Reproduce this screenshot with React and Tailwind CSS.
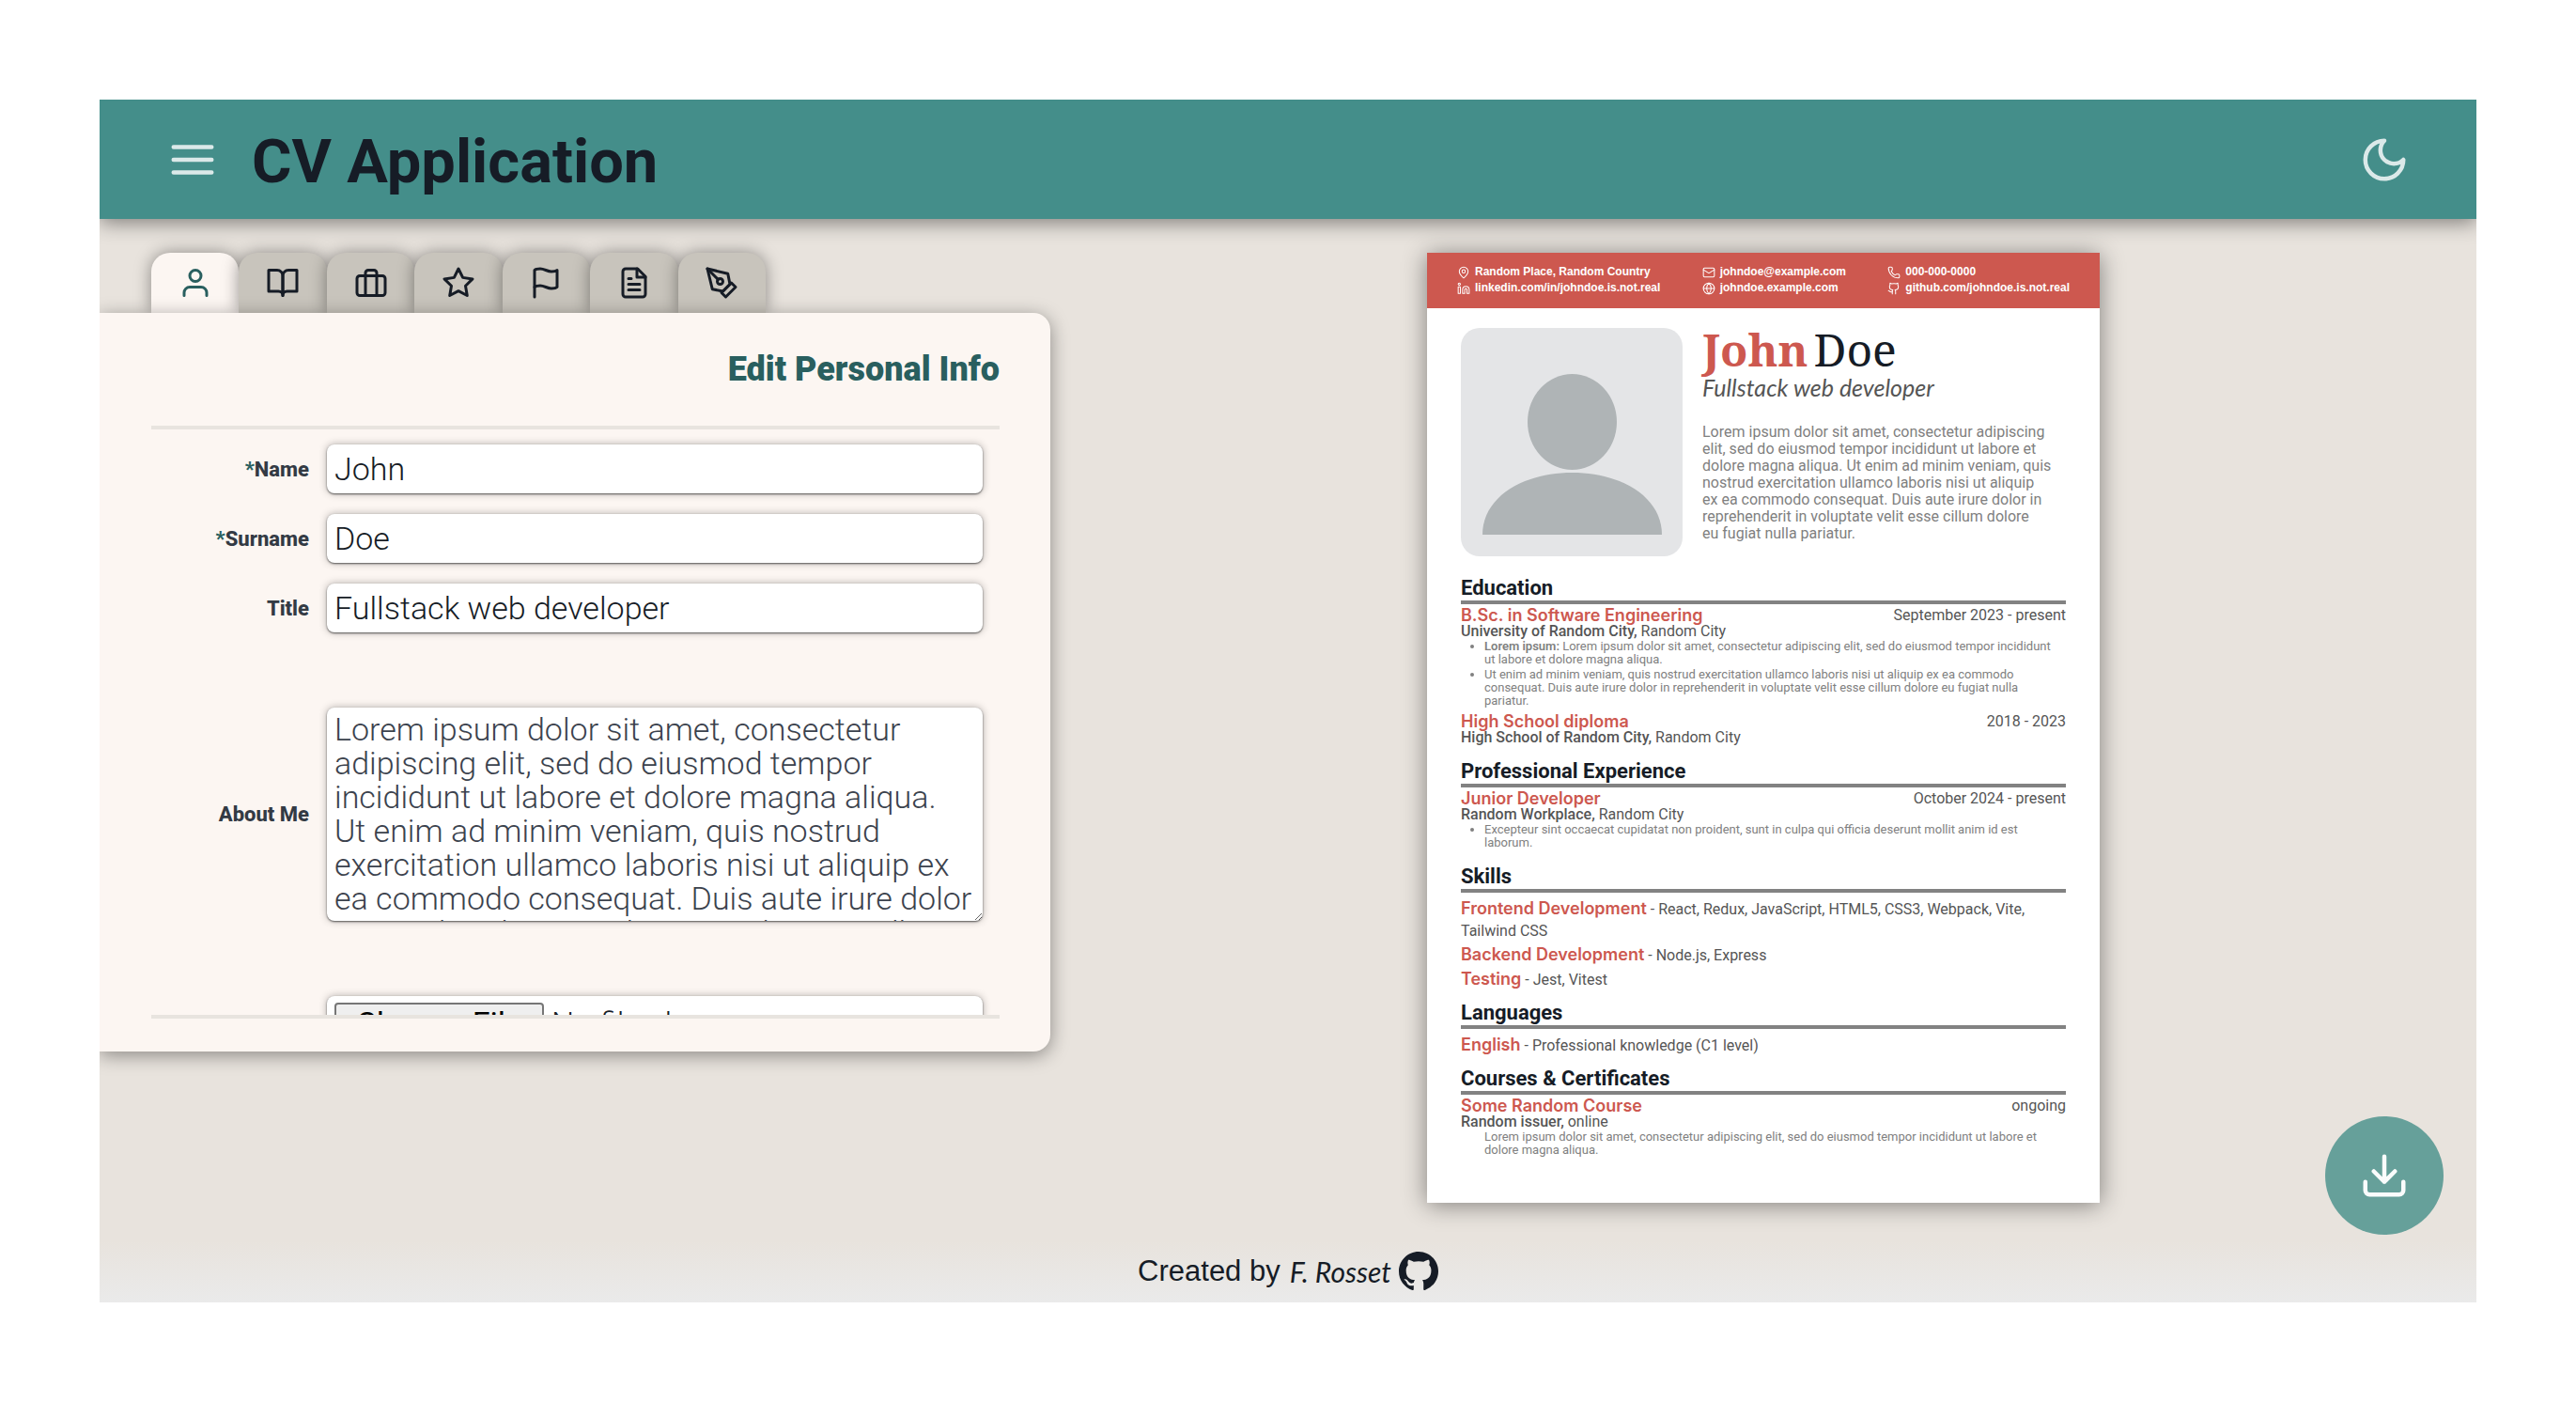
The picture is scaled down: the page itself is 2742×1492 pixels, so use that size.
import { Github, Globe, Linkedin, Mail, MapPin, Phone } from 'lucide-react';

const ABOUT =
  'Lorem ipsum dolor sit amet, consectetur adipiscing elit, sed do eiusmod tempor incididunt ut labore et dolore magna aliqua. Ut enim ad minim veniam, quis nostrud exercitation ullamco laboris nisi ut aliquip ex ea commodo consequat. Duis aute irure dolor in reprehenderit in voluptate velit esse cillum dolore eu fugiat nulla pariatur.';

function Icon({ className, children }) {
  return (
    <svg
      viewBox="0 0 24 24"
      fill="none"
      stroke="currentColor"
      strokeWidth="2"
      strokeLinecap="round"
      strokeLinejoin="round"
      aria-hidden="true"
      className={className}
    >
      {children}
    </svg>
  );
}

const TABS = [
  {
    label: 'Personal info',
    icon: (
      <>
        <path d="M20 21v-2a4 4 0 0 0-4-4H8a4 4 0 0 0-4 4v2" />
        <circle cx="12" cy="7" r="4" />
      </>
    ),
  },
  {
    label: 'Education',
    icon: (
      <>
        <path d="M2 3h6a4 4 0 0 1 4 4v14a3 3 0 0 0-3-3H2z" />
        <path d="M22 3h-6a4 4 0 0 0-4 4v14a3 3 0 0 1 3-3h7z" />
      </>
    ),
  },
  {
    label: 'Experience',
    icon: (
      <>
        <rect x="2" y="7" width="20" height="14" rx="2" />
        <path d="M16 21V5a2 2 0 0 0-2-2h-4a2 2 0 0 0-2 2v16" />
      </>
    ),
  },
  {
    label: 'Skills',
    icon: (
      <polygon points="12 2 15.09 8.26 22 9.27 17 14.14 18.18 21.02 12 17.77 5.82 21.02 7 14.14 2 9.27 8.91 8.26 12 2" />
    ),
  },
  {
    label: 'Languages',
    icon: (
      <>
        <path d="M4 15s1-1 4-1 5 2 8 2 4-1 4-1V3s-1 1-4 1-5-2-8-2-4 1-4 1z" />
        <path d="M4 22v-7" />
      </>
    ),
  },
  {
    label: 'Courses',
    icon: (
      <>
        <path d="M14.5 2H6a2 2 0 0 0-2 2v16a2 2 0 0 0 2 2h12a2 2 0 0 0 2-2V7.5L14.5 2z" />
        <path d="M14 2v6h6M16 13H8M16 17H8M10 9H8" />
      </>
    ),
  },
  {
    label: 'Customize',
    icon: (
      <>
        <path d="m12 19 7-7 3 3-7 7-3-3z" />
        <path d="m18 13-1.5-7.5L2 2l3.5 14.5L13 18l5-5z" />
        <path d="m2 2 7.586 7.586" />
        <circle cx="11" cy="11" r="2" />
      </>
    ),
  },
];

const FIELD =
  'w-full rounded-lg bg-white px-2 text-[34px] font-light shadow-[0_1px_2px_rgba(0,0,0,0.6),0_0_8px_rgba(0,0,0,0.3)]';
const LABEL = 'text-right text-[22px] font-extrabold text-[#333a44]';

function TopBar() {
  return (
    <header className="relative z-10 flex h-[127px] items-center justify-between bg-[#448e8a] pr-[71px] pl-[72px] shadow-[0_4px_20px_rgba(0,0,0,0.45)]">
      <div className="flex items-center gap-9">
        <button type="button" aria-label="Menu" className="text-[#dbe9e9]">
          <Icon className="size-[54px]">
            <path d="M3 6h18M3 12h18M3 18h18" />
          </Icon>
        </button>
        <h1 className="pt-1.5 text-[65px] leading-none font-bold text-[#161c26]">CV Application</h1>
      </div>
      <button type="button" aria-label="Dark mode" className="text-[#dbe9e9]">
        <Icon className="size-[54px]">
          <path d="M12 3a6 6 0 0 0 9 9 9 9 0 1 1-9-9Z" />
        </Icon>
      </button>
    </header>
  );
}

function Editor() {
  return (
    <section className="flex w-2/5 flex-col items-start">
      <nav className="ml-[55px] grid w-[654px] grid-cols-7">
        {TABS.map((tab, i) => (
          <button
            key={tab.label}
            type="button"
            aria-label={tab.label}
            className={
              i === 0
                ? 'flex h-16 items-center justify-center rounded-t-[20px] bg-[#fcf6f2] text-[#295f5f] shadow-[0_0_18px_rgba(0,0,0,0.4)]'
                : 'flex h-16 items-center justify-center rounded-t-[20px] bg-[#c8c4bc] text-[#161c26] shadow-[0_0_18px_rgba(0,0,0,0.4)]'
            }
          >
            <Icon className="size-9">{tab.icon}</Icon>
          </button>
        ))}
      </nav>
      <form className="relative w-full rounded-r-[18px] bg-[#fcf6f2] pr-[54px] pb-[35px] pl-[55px] shadow-[0_4px_20px_rgba(0,0,0,0.4)]">
        <h2 className="pt-9 pb-9 text-right text-4xl leading-[48px] font-black text-[#295f5f]">Edit Personal Info</h2>
        <div className="grid h-[631px] grid-cols-[168px_1fr] content-start items-center gap-x-[19px] gap-y-[22px] overflow-hidden border-y-4 border-[#e8e4df] pt-4 pr-[18px]">
          <label htmlFor="name" className={LABEL}>
            <span className="text-[#295f5f]">*</span>Name
          </label>
          <input id="name" defaultValue="John" className={`${FIELD} h-[52px] text-[#161c26]`} />
          <label htmlFor="surname" className={LABEL}>
            <span className="text-[#295f5f]">*</span>Surname
          </label>
          <input id="surname" defaultValue="Doe" className={`${FIELD} h-[52px] text-[#161c26]`} />
          <label htmlFor="title" className={LABEL}>Title</label>
          <input id="title" defaultValue="Fullstack web developer" className={`${FIELD} h-[52px] text-[#161c26]`} />
          <label htmlFor="about" className={LABEL}>About Me</label>
          <textarea
            id="about"
            defaultValue={ABOUT}
            className={`${FIELD} my-[58px] block h-[227px] overflow-hidden pt-[5px] leading-9 text-[#3b424d]`}
          />
          <label htmlFor="photo" className="sr-only">Photo</label>
          <input
            id="photo"
            type="file"
            className={`${FIELD} col-start-2 h-[52px] pt-1 text-[#161c26] file:mr-2 file:h-11 file:w-[223px] file:rounded file:border-2 file:border-[#767676] file:bg-[#efefef] file:text-[34px] file:leading-9 file:font-normal file:text-black`}
          />
        </div>
      </form>
    </section>
  );
}

function Contact({ icon: I, children }) {
  return (
    <li className="flex items-center gap-[5px]">
      <I className="size-3.5" strokeWidth={1.75} aria-hidden="true" />
      {children}
    </li>
  );
}

function Section({ title, children }) {
  return (
    <section className="mt-3">
      <h3 className="border-b-4 border-[#828282] pb-px text-[22px] leading-6 font-bold text-[#161c26]">{title}</h3>
      {children}
    </section>
  );
}

function Entry({ title, date, org, place, children }) {
  return (
    <div className="pb-[5px]">
      <div className="flex h-5 items-center justify-between">
        <h4 className="font-[Inter,sans-serif] text-lg leading-5 font-semibold text-[#cd584f]">{title}</h4>
        <p className="leading-5">{date}</p>
      </div>
      <p className="leading-3.5">
        <span className="font-medium">{org},</span> {place}
      </p>
      {children}
    </div>
  );
}

function Skill({ name, children }) {
  return (
    <li className="leading-[23px]">
      <b className="font-[Inter,sans-serif] text-lg leading-[23px] font-semibold text-[#cd584f]">{name}</b> - {children}
    </li>
  );
}

function Resume() {
  return (
    <article className="w-[716px] bg-white pb-11 text-base text-[#555] shadow-[0_2px_24px_rgba(0,0,0,0.45)]">
      <header className="flex justify-between bg-[#cd584f] px-8 pt-3 pb-[13px] font-['Liberation_Sans',sans-serif] text-xs leading-[17px] font-bold text-white">
        <ul>
          <Contact icon={MapPin}>Random Place, Random Country</Contact>
          <Contact icon={Linkedin}>linkedin.com/in/johndoe.is.not.real</Contact>
        </ul>
        <ul>
          <Contact icon={Mail}>johndoe@example.com</Contact>
          <Contact icon={Globe}>johndoe.example.com</Contact>
        </ul>
        <ul>
          <Contact icon={Phone}>000-000-0000</Contact>
          <Contact icon={Github}>github.com/johndoe.is.not.real</Contact>
        </ul>
      </header>
      <div className="px-9 pt-[21px]">
        <div className="mb-[22px] flex gap-[21px]">
          <svg viewBox="0 0 236 243" className="w-[236px] shrink-0" role="img" aria-label="Portrait">
            <rect width="236" height="243" rx="20" fill="#e4e5e7" />
            <ellipse cx="118.500" cy="100" rx="47.500" ry="51" fill="#afb4b6" />
            <path d="M23 220C23 180 66 154 118.500 154S214 180 214 220Z" fill="#afb4b6" />
          </svg>
          <div className="whitespace-nowrap">
            <h2 className="font-['Noto_Serif',serif] text-5xl leading-[46px] text-[#161c26]">
              <b className="text-[#cd584f]">John</b>
              <span className="ml-1.5">Doe</span>
            </h2>
            <p className="font-[Lato,sans-serif] text-[25px] leading-[34px] italic">Fullstack web developer</p>
            <p className="mt-[22px] leading-[18px] text-[#808080]">
              Lorem ipsum dolor sit amet, consectetur adipiscing<br />
              elit, sed do eiusmod tempor incididunt ut labore et<br />
              dolore magna aliqua. Ut enim ad minim veniam, quis<br />
              nostrud exercitation ullamco laboris nisi ut aliquip<br />
              ex ea commodo consequat. Duis aute irure dolor in<br />
              reprehenderit in voluptate velit esse cillum dolore<br />
              eu fugiat nulla pariatur.
            </p>
          </div>
        </div>
        <Section title="Education">
          <div className="pt-0.5">
            <Entry title="B.Sc. in Software Engineering" date="September 2023 - present" org="University of Random City" place="Random City">
              <ul className="flex list-disc flex-col gap-0.5 pt-0.5 pl-[25px] text-[13px] leading-3.5 whitespace-nowrap text-[#808080]">
                <li>
                  <b className="font-semibold">Lorem ipsum:</b> Lorem ipsum dolor sit amet, consectetur adipiscing elit, sed do eiusmod tempor incididunt<br />
                  ut labore et dolore magna aliqua.
                </li>
                <li>
                  Ut enim ad minim veniam, quis nostrud exercitation ullamco laboris nisi ut aliquip ex ea commodo<br />
                  consequat. Duis aute irure dolor in reprehenderit in voluptate velit esse cillum dolore eu fugiat nulla<br />
                  pariatur.
                </li>
              </ul>
            </Entry>
            <Entry title="High School diploma" date="2018 - 2023" org="High School of Random City" place="Random City" />
          </div>
        </Section>
        <Section title="Professional Experience">
          <div className="pt-0.5">
            <Entry title="Junior Developer" date="October 2024 - present" org="Random Workplace" place="Random City">
              <ul className="list-disc pt-0.5 pl-[25px] text-[13px] leading-3.5 whitespace-nowrap text-[#808080]">
                <li>
                  Excepteur sint occaecat cupidatat non proident, sunt in culpa qui officia deserunt mollit anim id est<br />
                  laborum.
                </li>
              </ul>
            </Entry>
          </div>
        </Section>
        <Section title="Skills">
          <ul className="flex flex-col gap-0.5 pt-[5px]">
            <Skill name="Frontend Development">
              React, Redux, JavaScript, HTML5, CSS3, Webpack, Vite,<br />
              Tailwind CSS
            </Skill>
            <Skill name="Backend Development">Node.js, Express</Skill>
            <Skill name="Testing">Jest, Vitest</Skill>
          </ul>
        </Section>
        <Section title="Languages">
          <ul className="pt-[5px]">
            <Skill name="English">Professional knowledge (C1 level)</Skill>
          </ul>
        </Section>
        <Section title="Courses & Certificates">
          <div className="pt-0.5">
            <Entry title="Some Random Course" date="ongoing" org="Random issuer" place="online">
              <p className="pt-0.5 pl-[25px] text-[13px] leading-3.5 whitespace-nowrap text-[#808080]">
                Lorem ipsum dolor sit amet, consectetur adipiscing elit, sed do eiusmod tempor incididunt ut labore et<br />
                dolore magna aliqua.
              </p>
            </Entry>
          </div>
        </Section>
      </div>
    </article>
  );
}

export default function App() {
  return (
    <div className="flex min-h-screen flex-col bg-white p-[106px] font-[Roboto,sans-serif]">
      <div className="relative flex flex-1 flex-col overflow-hidden bg-[#e8e3dd]">
        <TopBar />
        <main className="flex flex-1 items-start pt-9 pb-9">
          <Editor />
          <div className="flex flex-1 justify-center">
            <Resume />
          </div>
        </main>
        <footer className="flex h-[66px] items-center justify-center bg-linear-to-b from-[#e8e3dd] to-[#eaeaea] text-[#161c26]">
          <p className="font-['Liberation_Sans',sans-serif] text-[31px]">Created by</p>
          <a href="#author" className="ml-2.5 flex items-center gap-2 font-[Lato,sans-serif] text-[30px] italic">
            F. Rosset
            <svg viewBox="0 0 16 16" fill="currentColor" className="size-[42px]" aria-hidden="true">
              <path d="M8 0C3.58 0 0 3.58 0 8c0 3.54 2.290 6.530 5.470 7.590.4.070.550-.170.550-.380 0-.190-.010-.820-.010-1.490-2.010.370-2.530-.490-2.690-.940-.090-.230-.480-.940-.820-1.130-.280-.150-.680-.520-.010-.530.630-.010 1.080.580 1.230.820.720 1.210 1.870.870 2.330.660.070-.520.280-.870.510-1.070-1.780-.200-3.640-.890-3.640-3.950 0-.870.310-1.590.820-2.150-.080-.200-.360-1.020.080-2.120 0 0 .670-.210 2.200.820.640-.180 1.320-.270 2-.270s1.360.090 2 .270c1.530-1.040 2.200-.820 2.200-.820.440 1.100.160 1.920.080 2.120.510.560.820 1.270.820 2.150 0 3.070-1.870 3.750-3.650 3.950.290.250.540.730.540 1.480 0 1.070-.010 1.930-.010 2.200 0 .210.150.460.550.380A8.010 8.010 0 0 0 16 8c0-4.420-3.580-8-8-8z" />
            </svg>
          </a>
        </footer>
        <button
          type="button"
          aria-label="Download"
          className="absolute right-[35px] bottom-[72px] z-20 flex size-[126px] items-center justify-center rounded-full bg-[#66a09a] text-[#fafcfc]"
        >
          <Icon className="size-[54px]">
            <path d="M21 15v4a2 2 0 0 1-2 2H5a2 2 0 0 1-2-2v-4" />
            <path d="m7 10 5 5 5-5M12 15V3" />
          </Icon>
        </button>
      </div>
    </div>
  );
}
